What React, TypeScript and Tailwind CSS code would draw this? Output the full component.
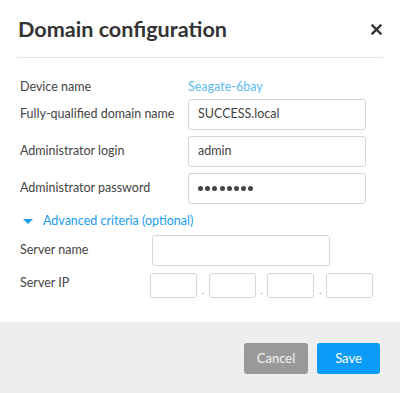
import React from "react";

const font = { fontFamily: "Lato, 'Noto Sans', sans-serif" };

function Field({ value, className = "", children }: { value?: string; className?: string; children?: React.ReactNode }) {
  return (
    <div
      className={`flex items-center rounded-[3px] border border-[#d6d6d6] bg-white px-[9px] text-[12.5px] text-[#444] ${className}`}
    >
      {value}
      {children}
    </div>
  );
}

function Row({ label, children, className = "" }: { label: string; children: React.ReactNode; className?: string }) {
  return (
    <div className={`flex items-center ${className}`}>
      <div className="w-[168px] shrink-0 text-[12.5px] text-[#444]">{label}</div>
      {children}
    </div>
  );
}

export default function App() {
  return (
    <div className="flex h-[393px] w-[400px] flex-col bg-white" style={font}>
      <div className="mx-[17px] flex h-[58px] items-center justify-between border-b border-[#e6e6e6] pl-[1px] pt-[2px]">
        <h1 className="text-[21.6px] font-bold text-[#333]">Domain configuration</h1>
        <button aria-label="Close" className="mr-[1px] grid size-[12px] place-items-center">
          <svg width="11" height="11" viewBox="0 0 11 11">
            <path d="M1.5 1.5 L9.5 9.5 M9.5 1.5 L1.5 9.5" stroke="#333" strokeWidth="2.4" strokeLinecap="square" />
          </svg>
        </button>
      </div>

      <div className="flex flex-1 flex-col px-[20px] pt-[17px]">
        <Row label="Device name" className="h-[24px]">
          <span className="pt-[1px] text-[12.5px] text-[#5cbcf2]">Seagate-6bay</span>
        </Row>
        <Row label="Fully-qualified domain name">
          <Field value="SUCCESS.local" className="h-[31px] w-[178px]" />
        </Row>
        <Row label="Administrator login" className="mt-[6px]">
          <Field value="admin" className="h-[31px] w-[178px]" />
        </Row>
        <Row label="Administrator password" className="mt-[6px]">
          <Field className="h-[31px] w-[178px]">
            <span className="flex gap-[2.2px]">
              {Array.from({ length: 8 }).map((_, i) => (
                <span key={i} className="size-[5px] rounded-full bg-[#444]" />
              ))}
            </span>
          </Field>
        </Row>

        <div className="mt-[8px] flex h-[18px] items-center pl-[3px] text-[12.5px] text-[#1a9cf0]">
          <svg width="10" height="5" viewBox="0 0 10 5" className="mr-[10px]">
            <path d="M0 0 L10 0 L5 5 Z" fill="#1a9cf0" />
          </svg>
          Advanced criteria (optional)
        </div>

        <div className="mt-[5px] flex items-center">
          <div className="w-[132px] shrink-0 text-[12.5px] text-[#444]">Server name</div>
          <Field className="h-[31px] w-[178px]" />
        </div>
        <div className="mt-[7px] flex items-start">
          <div className="w-[130px] shrink-0 pt-[1px] text-[12.5px] text-[#444]">Server IP</div>
          <div className="flex w-[223px] items-end justify-between">
            <Field className="h-[25px] w-[47px]" />
            <span className="pb-[3px] text-[10px] leading-none text-[#888]">.</span>
            <Field className="h-[25px] w-[47px]" />
            <span className="pb-[3px] text-[10px] leading-none text-[#888]">.</span>
            <Field className="h-[25px] w-[47px]" />
            <span className="pb-[3px] text-[10px] leading-none text-[#888]">.</span>
            <Field className="h-[25px] w-[47px]" />
          </div>
        </div>
      </div>

      <div className="flex h-[71px] items-center justify-end gap-[9px] bg-[#eeeeee] pr-[20px] pt-[2px]">
        <button className="h-[31px] w-[64px] rounded-[3px] bg-[#999999] text-[13px] text-[#f2f2f2]">Cancel</button>
        <button className="h-[31px] w-[63px] rounded-[3px] bg-[#0a9cf7] text-[13px] text-white">Save</button>
      </div>
    </div>
  );
}
